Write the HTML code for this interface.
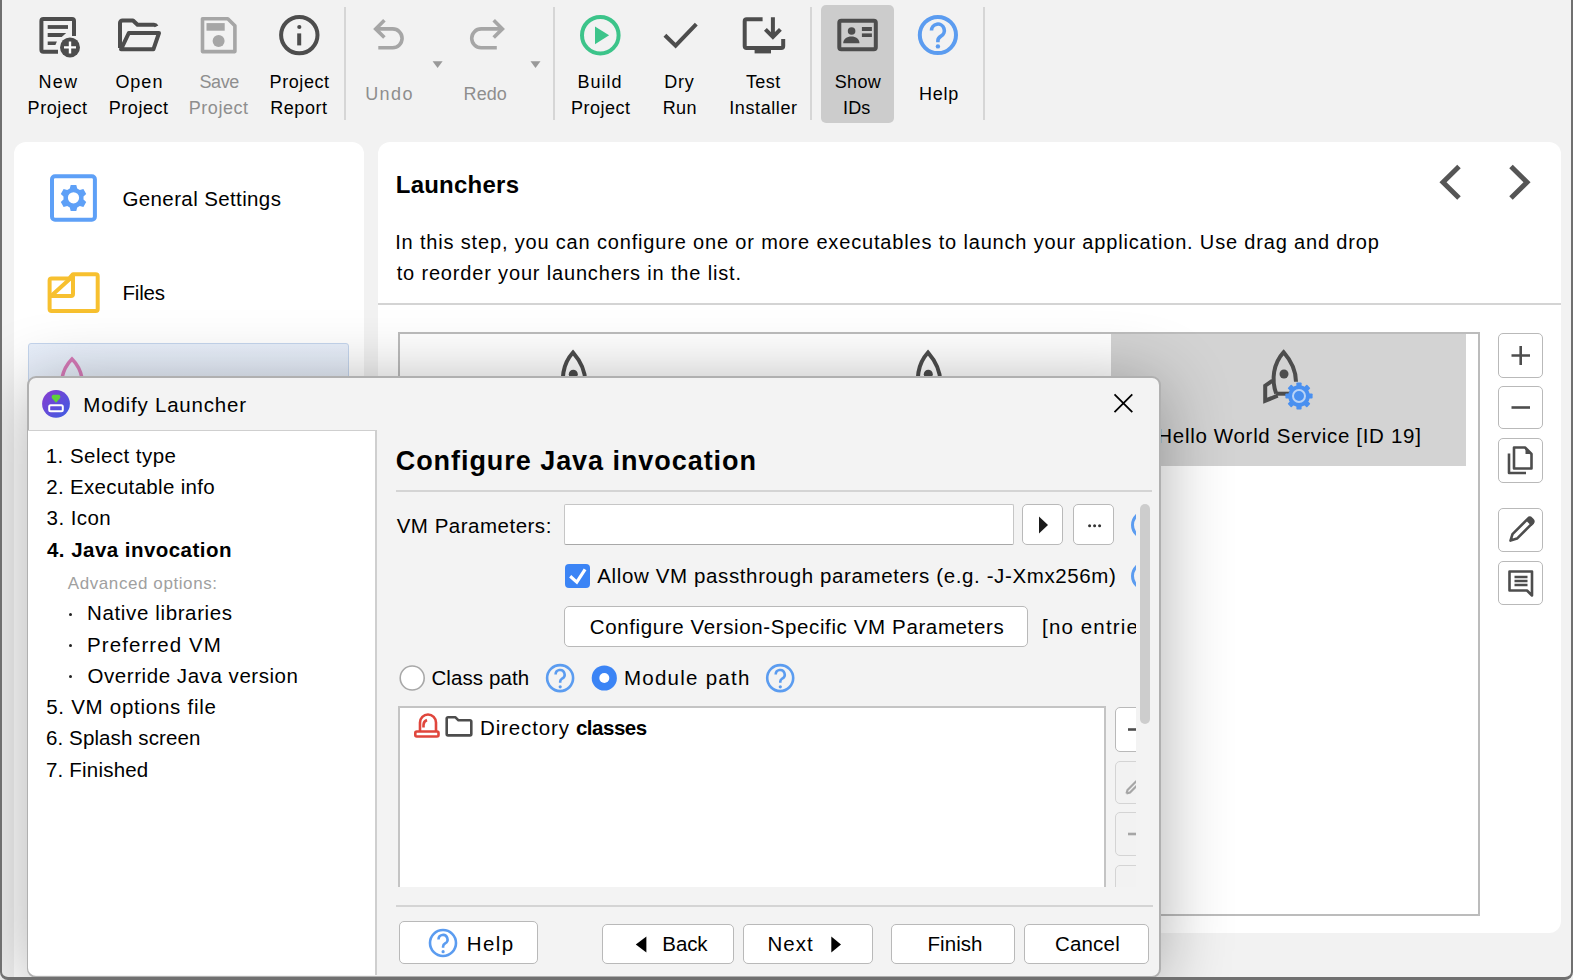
<!DOCTYPE html>
<html><head><meta charset="utf-8"><style>
*{box-sizing:border-box;margin:0;padding:0}
html,body{width:1573px;height:980px;overflow:hidden;background:#f2f2f2;font-family:"Liberation Sans",sans-serif;color:#000}
.a{position:absolute}
.t{position:absolute;white-space:nowrap;line-height:1}
svg{position:absolute;left:0;top:0;overflow:visible}
.btn{position:absolute;background:#fff;border:1.3px solid #b9b9b9;border-radius:5px}
</style></head><body>
<div class="a" style="left:343.5px;top:7px;width:2px;height:113px;background:#d6d6d6"></div>
<div class="a" style="left:552.5px;top:7px;width:2px;height:113px;background:#d6d6d6"></div>
<div class="a" style="left:809.5px;top:7px;width:2px;height:113px;background:#d6d6d6"></div>
<div class="a" style="left:982.5px;top:7px;width:2px;height:113px;background:#d6d6d6"></div>
<div class="a" style="left:821px;top:5px;width:73px;height:118px;background:#cccccc;border-radius:5px"></div>
<div class="t" style="left:38.46px;top:72.76px;font-size:18px;letter-spacing:1.225px">New</div>
<div class="t" style="left:27.56px;top:98.56px;font-size:18px;letter-spacing:0.592px">Project</div>
<div class="t" style="left:115.39px;top:72.76px;font-size:18px;letter-spacing:0.993px">Open</div>
<div class="t" style="left:108.76px;top:98.56px;font-size:18px;letter-spacing:0.542px">Project</div>
<div class="t" style="left:199.49px;top:72.86px;font-size:18px;letter-spacing:-0.437px;color:#8e8e8e">Save</div>
<div class="t" style="left:188.76px;top:98.56px;font-size:18px;letter-spacing:0.558px;color:#8e8e8e">Project</div>
<div class="t" style="left:269.56px;top:72.86px;font-size:18px;letter-spacing:0.592px">Project</div>
<div class="t" style="left:270.16px;top:98.56px;font-size:18px;letter-spacing:0.586px">Report</div>
<div class="t" style="left:365.15px;top:84.86px;font-size:18px;letter-spacing:1.417px;color:#8e8e8e">Undo</div>
<div class="t" style="left:463.56px;top:84.86px;font-size:18px;letter-spacing:0.080px;color:#8e8e8e">Redo</div>
<div class="t" style="left:577.56px;top:72.96px;font-size:18px;letter-spacing:0.967px">Build</div>
<div class="t" style="left:570.96px;top:98.86px;font-size:18px;letter-spacing:0.525px">Project</div>
<div class="t" style="left:664.26px;top:72.96px;font-size:18px;letter-spacing:0.775px">Dry</div>
<div class="t" style="left:662.66px;top:98.86px;font-size:18px;letter-spacing:0.395px">Run</div>
<div class="t" style="left:745.94px;top:72.96px;font-size:18px;letter-spacing:0.437px">Test</div>
<div class="t" style="left:729.28px;top:98.86px;font-size:18px;letter-spacing:0.587px">Installer</div>
<div class="t" style="left:834.69px;top:73.06px;font-size:18px;letter-spacing:0.373px">Show</div>
<div class="t" style="left:843.08px;top:98.66px;font-size:18px;letter-spacing:0.075px">IDs</div>
<div class="t" style="left:918.96px;top:84.96px;font-size:18px;letter-spacing:0.723px">Help</div>
<svg width="1573" height="980">
<g fill="none" stroke="#4d4d4d" stroke-width="4">
 <path d="M58 51.7H43.4a2 2 0 0 1-2-2V20.9a2 2 0 0 1 2-2h28.6a2 2 0 0 1 2 2V36"/>
</g>
<g fill="#4d4d4d">
 <rect x="47.7" y="25.1" width="20.3" height="3.8"/>
 <path d="M47.7 33.1h18.5l-4.5 3.8h-14z"/>
 <path d="M47.7 41.4h9.2l-1.5 3.7h-7.7z"/>
 <circle cx="70" cy="47.4" r="11.5" fill="#f2f2f2"/><circle cx="70" cy="47.4" r="10"/>
</g>
<g stroke="#fff" stroke-width="2.4"><path d="M70 41.4v12M64 47.4h12"/></g>
<g fill="none" stroke="#4d4d4d" stroke-width="4" stroke-linejoin="round">
 <path d="M120 48V23a2.5 2.5 0 0 1 2.5-2.5h10.5l4.5 4.3h16.5a3 3 0 0 1 2.6 1.6"/>
 <path d="M128.8 33h30.2l-5.6 16.3H121z"/>
</g>
<g fill="none" stroke="#a6a6a6" stroke-width="3.6" stroke-linejoin="round">
 <path d="M202.5 18.7h25.3l7.1 7.1v25.8h-32.4z"/>
</g>
<g fill="#a6a6a6"><rect x="206.5" y="23.1" width="18.2" height="7.6"/><circle cx="218.6" cy="41.1" r="6"/></g>
<circle cx="299.3" cy="35.1" r="18.2" fill="none" stroke="#4d4d4d" stroke-width="4"/>
<g fill="#4d4d4d"><circle cx="299.3" cy="27" r="2.1"/><rect x="297.2" y="33.4" width="4" height="12"/></g>
<g fill="none" stroke="#a6a6a6" stroke-width="3.6">
 <path d="M384.4 20.2l-8.7 8.7 8.7 8.6"/>
 <path d="M375.7 28.9h17a9.4 9.4 0 0 1 0 18.8h-14.4"/>
 <path d="M493.7 20.2l8.7 8.7-8.7 8.6"/>
 <path d="M502.4 28.9H481.1a9.4 9.4 0 0 0 0 18.8H496.8"/>
</g>
<g fill="#999"><path d="M432.6 61.3h10l-5 6.6z"/><path d="M530.5 61.3h10l-5 6.6z"/></g>
<circle cx="600.3" cy="35.2" r="18.3" fill="none" stroke="#3cc48a" stroke-width="4"/>
<path d="M595 26.6v17.6l14.1-9z" fill="#3cc48a"/>
<path d="M664.9 35.2l10.7 10.5 20.7-21.5" fill="none" stroke="#4d4d4d" stroke-width="4"/>
<g fill="none" stroke="#4d4d4d" stroke-width="4">
 <path d="M762.6 19.2h-15.9a2 2 0 0 0-2 2v24.8a2 2 0 0 0 2 2h34.5a2 2 0 0 0 2-2v-7"/>
 <path d="M772.9 17.2v19M765.4 29.3l7.5 7.5 7.5-7.5"/>
</g>
<rect x="754.6" y="49" width="16.4" height="4.4" fill="#4d4d4d"/>
<rect x="839.3" y="20.8" width="36.5" height="28.4" rx="2" fill="none" stroke="#4d4d4d" stroke-width="4"/>
<g fill="#4d4d4d"><circle cx="851.6" cy="31" r="3.8"/><path d="M843.2 43.2c0-4 3.7-6.6 8.2-6.6s8.1 2.6 8.1 6.6z"/>
<rect x="861.9" y="27" width="10" height="4"/><rect x="861.9" y="33.4" width="10" height="3.6"/></g>
<circle cx="937.9" cy="35" r="18.1" fill="none" stroke="#5b9cf0" stroke-width="4"/>
<path d="M931.5 30.5a6.4 6.4 0 1 1 9.5 5.6c-2 1.2-3.1 2.3-3.1 4.6v1.5" fill="none" stroke="#5b9cf0" stroke-width="3.6"/>
<circle cx="937.9" cy="46.4" r="2.2" fill="#5b9cf0"/>
</svg>
<div class="a" style="left:14px;top:142px;width:350px;height:850px;background:#fff;border-radius:12px"></div>
<div class="t" style="left:122.47px;top:188.74px;font-size:20.5px;letter-spacing:0.381px">General Settings</div>
<div class="t" style="left:122.46px;top:282.74px;font-size:20.5px;letter-spacing:-0.174px">Files</div>
<div class="a" style="left:28px;top:343px;width:321px;height:80px;background:linear-gradient(#e9f0fb,#e3ebf7);border:1px solid #c5d6ee;border-radius:3px"></div>
<svg width="1573" height="980">
<rect x="52" y="176.3" width="42.9" height="43.4" rx="3" fill="none" stroke="#5ea0f7" stroke-width="4"/>
<g transform="translate(73.5 197.8)" fill="#5ea0f7">
 <path d="M-2.8-12.8h5.6l.9 3.6 2.6 1.5 3.6-1 2.8 4.8-2.7 2.6v3l2.7 2.6-2.8 4.8-3.6-1-2.6 1.5-.9 3.6h-5.6l-.9-3.6-2.6-1.5-3.6 1-2.8-4.8 2.7-2.6v-3l-2.7-2.6 2.8-4.8 3.6 1 2.6-1.5z M0-5.6a5.6 5.6 0 1 0 0 11.2a5.6 5.6 0 1 0 0-11.2z" fill-rule="evenodd"/>
</g>
<g fill="none" stroke="#f7c02f" stroke-width="4" stroke-linejoin="round">
 <path d="M49.6 280.5a2 2 0 0 1 2-2h17.4l4-4.3h22.7a2 2 0 0 1 2 2v32.8a2 2 0 0 1-2 2h-44.1a2 2 0 0 1-2-2z"/>
 <path d="M73 275v19a2 2 0 0 1-2 2h-21.4M72 277l-21.5 19.5"/>
</g>
<path d="M62 378c1.5-8 6-15 10-19 4 4 8.5 11 10 19" fill="none" stroke="#d77bb8" stroke-width="3.5"/>
</svg>
<div class="a" style="left:378px;top:142px;width:1183px;height:791px;background:#fff;border-radius:12px"></div>
<div class="t" style="left:395.74px;top:173.08px;font-size:24px;letter-spacing:0.237px;font-weight:bold">Launchers</div>
<div class="t" style="left:395.20px;top:232.07px;font-size:20px;letter-spacing:0.831px">In this step, you can configure one or more executables to launch your application. Use drag and drop</div>
<div class="t" style="left:396.70px;top:262.87px;font-size:20px;letter-spacing:0.832px">to reorder your launchers in the list.</div>
<div class="a" style="left:378px;top:302.5px;width:1183px;height:2px;background:#d4d4d4"></div>
<div class="a" style="left:398px;top:332px;width:1082px;height:584px;border:2px solid #bcbcbc;background:#fff"></div>
<div class="a" style="left:1111px;top:334px;width:355px;height:131.5px;background:#d3d3d3"></div>
<div class="t" style="left:1157.36px;top:425.74px;font-size:20.5px;letter-spacing:0.684px">Hello World Service [ID 19]</div>
<div class="btn" style="left:1498px;top:332.6px;width:45px;height:45px"></div>
<div class="btn" style="left:1498px;top:386px;width:45px;height:43.4px"></div>
<div class="btn" style="left:1498px;top:437.8px;width:45px;height:45.4px"></div>
<div class="btn" style="left:1498px;top:507.9px;width:45px;height:44.6px"></div>
<div class="btn" style="left:1498px;top:561px;width:45px;height:43.5px"></div>
<svg width="1573" height="980">
<g fill="none" stroke="#555" stroke-width="5"><path d="M1459 166.5l-16 15.7 16 15.8"/><path d="M1511 166.5l16 15.7-16 15.8"/></g>
<g stroke="#4d4d4d" stroke-width="2.6"><path d="M1520.7 346v19M1511.5 355.5h18.5"/><path d="M1511.5 407.5h18.5"/></g>
<g fill="none" stroke="#4d4d4d" stroke-width="2.6" stroke-linejoin="round">
 <path d="M1514 447.5h11l6.5 6.5v14.5h-17.5z"/><path d="M1509 453.5v19.5h17"/>
</g>
<path d="M1525.5 447.5v6.5h6.5z" fill="#4d4d4d"/>
<g fill="none" stroke="#4d4d4d" stroke-width="2.6" stroke-linejoin="round">
 <path d="M1510.5 540.6l2-6.5 15.5-15.5a2.5 2.5 0 0 1 3.5 0l1 1a2.5 2.5 0 0 1 0 3.5l-15.5 15.5z"/>
 <path d="M1509.5 571.5h22.5v24l-5-5h-17.5z"/>
 <path d="M1514.5 577h13M1514.5 581h13M1514.5 585h13"/>
</g>
<path d="M1526 520.5l5.5 5.5 2-2c1-1 1-2.5 0-3.5l-2-2c-1-1-2.5-1-3.5 0z" fill="#4d4d4d"/>

<g fill="none" stroke="#4d4d4d" stroke-width="4" stroke-linejoin="miter">
 <path d="M565.5 394.0C560.5 380.0 562.5 364.0 573.0 352.5C583.0 364.0 585.3 374.0 585.3 382.0"/>
 <path d="M561.8 381.0L554.5 386.0L554.5 401.0L567.0 396.0"/>
 <path d="M565.5 394.0L581.0 394.0"/>
</g><circle cx="573.3" cy="374.3" r="4.5" fill="#4d4d4d"/><g fill="none" stroke="#4d4d4d" stroke-width="4" stroke-linejoin="miter">
 <path d="M920.5 394.0C915.5 380.0 917.5 364.0 928.0 352.5C938.0 364.0 940.3 374.0 940.3 382.0"/>
 <path d="M916.8 381.0L909.5 386.0L909.5 401.0L922.0 396.0"/>
 <path d="M920.5 394.0L936.0 394.0"/>
</g><circle cx="928.3" cy="374.3" r="4.5" fill="#4d4d4d"/>
<g fill="none" stroke="#4d4d4d" stroke-width="4" stroke-linejoin="miter">
 <path d="M1276.2 393.7C1271.2 379.7 1273.2 363.7 1283.7 352.2C1293.7 363.7 1296.0 373.7 1296.0 381.7"/>
 <path d="M1272.5 380.7L1265.2 385.7L1265.2 400.7L1277.7 395.7"/>
 <path d="M1276.2 393.7L1291.7 393.7"/>
</g><circle cx="1284.0" cy="374.0" r="4.5" fill="#4d4d4d"/>
<g transform="translate(1299 396)" fill="#4a90f0">
<circle r="10.8"/>
<g><rect x="-2.6" y="-13.6" width="5.2" height="5" rx=".8"/><rect x="-2.6" y="8.6" width="5.2" height="5" rx=".8"/><rect x="-13.6" y="-2.6" width="5" height="5.2" rx=".8"/><rect x="8.6" y="-2.6" width="5" height="5.2" rx=".8"/></g>
<g transform="rotate(45)"><rect x="-2.6" y="-13.6" width="5.2" height="5" rx=".8"/><rect x="-2.6" y="8.6" width="5.2" height="5" rx=".8"/><rect x="-13.6" y="-2.6" width="5" height="5.2" rx=".8"/><rect x="8.6" y="-2.6" width="5" height="5.2" rx=".8"/></g>
<circle r="6" fill="none" stroke="#b9d3f6" stroke-width="2"/><circle r="3.9"/></g>
</svg>
<div class="a" style="left:26.5px;top:375.8px;width:1134.5px;height:602px;background:#f3f3f3;border:2px solid #b0b0b0;border-radius:9px;box-shadow:0 8px 70px rgba(0,0,0,0.32)"></div>
<div class="a" style="left:28px;top:430px;width:348.5px;height:545px;background:#fff;border-top:1px solid #cfcfcf;border-right:2px solid #cfcfcf;border-bottom-left-radius:7px"></div>
<div class="t" style="left:83.36px;top:394.64px;font-size:20.5px;letter-spacing:0.789px">Modify Launcher</div>
<div class="t" style="left:45.76px;top:445.94px;font-size:20.5px;letter-spacing:0.464px">1. Select type</div>
<div class="t" style="left:46.27px;top:476.94px;font-size:20.5px;letter-spacing:0.322px">2. Executable info</div>
<div class="t" style="left:46.58px;top:508.24px;font-size:20.5px;letter-spacing:0.425px">3. Icon</div>
<div class="t" style="left:46.99px;top:539.74px;font-size:20.5px;letter-spacing:0.461px;font-weight:bold">4. Java invocation</div>
<div class="t" style="left:67.80px;top:574.61px;font-size:17px;letter-spacing:0.582px;color:#a0a0a0">Advanced options:</div>
<div class="t" style="left:87.06px;top:602.94px;font-size:20.5px;letter-spacing:0.630px">Native libraries</div>
<div class="t" style="left:87.06px;top:634.74px;font-size:20.5px;letter-spacing:1.073px">Preferred VM</div>
<div class="t" style="left:87.58px;top:665.54px;font-size:20.5px;letter-spacing:0.550px">Override Java version</div>
<div class="t" style="left:46.18px;top:697.44px;font-size:20.5px;letter-spacing:0.736px">5. VM options file</div>
<div class="t" style="left:45.98px;top:728.24px;font-size:20.5px;letter-spacing:0.115px">6. Splash screen</div>
<div class="t" style="left:45.98px;top:760.04px;font-size:20.5px;letter-spacing:0.201px">7. Finished</div>
<div class="a" style="left:68.5px;top:612.5px;width:3.2px;height:3.2px;background:#222;border-radius:50%"></div>
<div class="a" style="left:68.5px;top:644.3px;width:3.2px;height:3.2px;background:#222;border-radius:50%"></div>
<div class="a" style="left:68.5px;top:675.1px;width:3.2px;height:3.2px;background:#222;border-radius:50%"></div>
<div class="t" style="left:395.72px;top:448.34px;font-size:27px;letter-spacing:0.946px;font-weight:bold">Configure Java invocation</div>
<div class="a" style="left:396px;top:490px;width:756px;height:2px;background:#d4d4d4"></div>
<div class="t" style="left:396.70px;top:515.84px;font-size:20.5px;letter-spacing:0.503px">VM Parameters:</div>
<div class="a" style="left:563.5px;top:503.5px;width:450px;height:41.5px;background:#fff;border:1px solid #c6c6c6;border-bottom:1px solid #a8a8a8;border-radius:2px"></div>
<div class="btn" style="left:1021.5px;top:503.5px;width:41.2px;height:41.5px"></div>
<div class="btn" style="left:1073px;top:503.5px;width:40.8px;height:41.5px"></div>
<div class="a" style="left:565.3px;top:563.5px;width:24.6px;height:24.3px;background:#3b84f5;border-radius:4px"></div>
<div class="t" style="left:597.30px;top:566.34px;font-size:20.5px;letter-spacing:0.621px">Allow VM passthrough parameters (e.g. -J-Xmx256m)</div>
<div class="btn" style="left:564px;top:606.4px;width:464px;height:40.3px"></div>
<div class="t" style="left:589.77px;top:617.04px;font-size:20.5px;letter-spacing:0.621px">Configure Version-Specific VM Parameters</div>
<div class="a" style="left:1036px;top:600px;width:100px;height:50px;overflow:hidden">
<div class="t" style="left:6.06px;top:17.04px;font-size:20.5px;letter-spacing:1.141px">[no entrie</div>
</div>
<div class="t" style="left:431.38px;top:668.04px;font-size:20.5px;letter-spacing:0.110px">Class path</div>
<div class="t" style="left:623.96px;top:668.04px;font-size:20.5px;letter-spacing:1.252px">Module path</div>
<div class="a" style="left:398px;top:706px;width:708px;height:181px;border:2px solid #c4c4c4;border-bottom:none;background:#fff"></div>
<div class="t" style="left:479.96px;top:717.74px;font-size:20.5px;letter-spacing:0.880px">Directory</div>
<div class="t" style="left:575.88px;top:717.74px;font-size:20.5px;letter-spacing:-0.461px;font-weight:bold">classes</div>
<div class="a" style="left:1110px;top:700px;width:26px;height:187px;overflow:hidden">
<div class="btn" style="left:5.4px;top:7px;width:45px;height:45px"></div>
<div class="btn" style="left:5.4px;top:60.7px;width:45px;height:43px;background:#f2f2f2;border-color:#d4d4d4"></div>
<div class="btn" style="left:5.4px;top:112px;width:45px;height:44px;background:#f2f2f2;border-color:#d4d4d4"></div>
<div class="btn" style="left:5.4px;top:164.6px;width:45px;height:44px;background:#f2f2f2;border-color:#d4d4d4"></div>
</div>
<div class="a" style="left:1139.6px;top:504px;width:10.1px;height:220.3px;background:#cdcdcd;border-radius:5px"></div>
<div class="a" style="left:396px;top:904.5px;width:756.5px;height:2px;background:#d4d4d4"></div>
<div class="btn" style="left:399.4px;top:921.2px;width:138.3px;height:43px"></div>
<div class="btn" style="left:602.2px;top:923.5px;width:131.7px;height:40px"></div>
<div class="btn" style="left:742.6px;top:923.8px;width:130.9px;height:40px"></div>
<div class="btn" style="left:891.4px;top:923.8px;width:123.9px;height:40px"></div>
<div class="btn" style="left:1024.3px;top:923.8px;width:124.4px;height:40px"></div>
<div class="t" style="left:466.66px;top:933.64px;font-size:20.5px;letter-spacing:1.444px">Help</div>
<div class="t" style="left:662.36px;top:933.64px;font-size:20.5px;letter-spacing:-0.124px">Back</div>
<div class="t" style="left:767.56px;top:933.94px;font-size:20.5px;letter-spacing:0.972px">Next</div>
<div class="t" style="left:927.56px;top:933.94px;font-size:20.5px;letter-spacing:0.047px">Finish</div>
<div class="t" style="left:1054.88px;top:933.94px;font-size:20.5px;letter-spacing:0.200px">Cancel</div>
<svg width="1573" height="980">
<defs><linearGradient id="pg" x1="0" y1="0" x2="1" y2="1"><stop offset="0" stop-color="#8a3bd0"/><stop offset="1" stop-color="#3b5ee3"/></linearGradient></defs>
<circle cx="56" cy="403.8" r="13.9" fill="url(#pg)"/>
<path d="M51.8 396.3q0-1.5 1.5-1.5h5.4q1.5 0 1.5 1.5v1.8l-4.2 4.6-4.2-4.6z" fill="#5fd23a"/>
<rect x="49.2" y="405.2" width="13.6" height="6.1" rx="1.5" fill="none" stroke="#fff" stroke-width="2"/>
<path d="M1114.5 394.4l17.8 17.7M1132.3 394.4l-17.8 17.7" stroke="#000" stroke-width="1.8"/>
<path d="M1039 516.5v17l9-8.5z" fill="#1a1a1a"/>
<g fill="#333"><circle cx="1089.6" cy="525.8" r="1.5"/><circle cx="1094.6" cy="525.8" r="1.5"/><circle cx="1099.6" cy="525.8" r="1.5"/></g>
<path d="M570.2 576.3l6.6 5.8 8.3-12.7" fill="none" stroke="#fff" stroke-width="3.2"/>
<circle cx="412.2" cy="678" r="12" fill="#fff" stroke="#a8a8a8" stroke-width="1.6"/>
<circle cx="604.3" cy="678" r="12.6" fill="#3b84f5"/><circle cx="604.3" cy="678" r="5" fill="#fff"/>
<g fill="none" stroke="#5b9cf0" stroke-width="2.6">
 <circle cx="560.1" cy="678.1" r="13"/><circle cx="780.2" cy="678.1" r="13"/><circle cx="443" cy="943" r="13"/>
</g>
<g fill="none" stroke="#5b9cf0" stroke-width="2.6">
 <path d="M555.6 674.5a4.5 4.5 0 1 1 6.6 4c-1.3.8-2 1.6-2 3.1v1.2"/>
 <path d="M775.7 674.5a4.5 4.5 0 1 1 6.6 4c-1.3.8-2 1.6-2 3.1v1.2"/>
 <path d="M438.5 939.4a4.5 4.5 0 1 1 6.6 4c-1.3.8-2 1.6-2 3.1v1.2"/>
</g>
<g fill="#5b9cf0"><circle cx="560.2" cy="686.8" r="1.6"/><circle cx="780.3" cy="686.8" r="1.6"/><circle cx="443.1" cy="951.7" r="1.6"/></g>
<g clip-path="url(#cb)"><defs><clipPath id="cb"><rect x="1120" y="500" width="16" height="100"/></clipPath></defs>
 <circle cx="1145.5" cy="525" r="13" fill="none" stroke="#5b9cf0" stroke-width="3"/>
 <circle cx="1145.5" cy="576" r="13" fill="none" stroke="#5b9cf0" stroke-width="3"/>
</g>
<g fill="none" stroke="#e0463c" stroke-width="2.6" stroke-linejoin="round">
 <path d="M420 731V722.5a8 8 0 0 1 16 0V731"/><rect x="415.3" y="731.5" width="23.2" height="5" rx="1.5"/><path d="M423.5 727.5v-2.5a5.5 5.5 0 0 1 3.5-5"/>
</g>
<path d="M446.7 734.1V718.6a1.3 1.3 0 0 1 1.3-1.3h7.5l3 3h11.5a1.3 1.3 0 0 1 1.3 1.3V734.1a1.3 1.3 0 0 1-1.3 1.3H448a1.3 1.3 0 0 1-1.3-1.3z" fill="none" stroke="#4d4d4d" stroke-width="2.6" stroke-linejoin="round"/>
<path d="M646.4 936.5v16l-10.6-8z" fill="#000"/>
<path d="M831.3 936.5v16l9.7-8z" fill="#000"/>
<g clip-path="url(#rb)"><defs><clipPath id="rb"><rect x="1110" y="700" width="26" height="187"/></clipPath></defs>
 <path d="M1128 729.5h10" stroke="#4d4d4d" stroke-width="2.6"/>
 <path d="M1126.5 793.5l1-3.5 9-9M1126.5 793.5l3.5-1 7-7" fill="none" stroke="#a6a6a6" stroke-width="2.2"/>
 <path d="M1128 834h10" stroke="#a6a6a6" stroke-width="2.6"/>
</g>
</svg>
<div class="a" style="left:0;top:-20px;width:1573px;height:1000px;border:solid #707070;border-width:0 2.5px 3.5px 2px;border-radius:0 0 8px 8px"></div>
</body></html>
